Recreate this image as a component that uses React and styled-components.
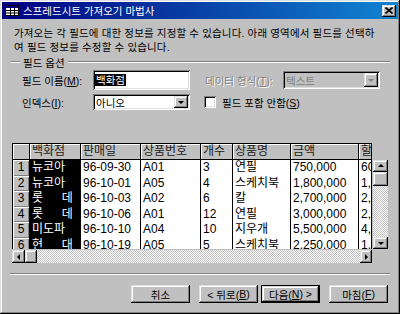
import React from 'react';
import styled, { createGlobalStyle, css } from 'styled-components';

const GlobalStyle = createGlobalStyle`
  html, body { margin: 0; padding: 0; background: #c0c0c0; }
  body { font-family: "Liberation Sans", "Noto Sans CJK KR", sans-serif; }
  * { box-sizing: border-box; }
`;

const raised = css`
  box-shadow: inset -1px -1px #000, inset 1px 1px #dfdfdf, inset -2px -2px #808080, inset 2px 2px #fff;
`;

const sunken = css`
  box-shadow: inset 1px 1px #808080, inset -1px -1px #fff, inset 2px 2px #000, inset -2px -2px #dfdfdf;
`;

const checker = css`
  background: repeating-conic-gradient(#c0c0c0 0 25%, #fff 0 50%) 0 0 / 2px 2px;
`;

const columns = [
  { title: '백화점', width: 51, selected: true },
  { title: '판매일', width: 60 },
  { title: '상품번호', width: 60 },
  { title: '개수', width: 32 },
  { title: '상품명', width: 58 },
  { title: '금액', width: 68 },
  { title: '할', width: 12, last: true },
];

const rows = [
  ['뉴코아', '96-09-30', 'A01', '3', '연필', '750,000', '60'],
  ['뉴코아', '96-10-01', 'A05', '4', '스케치북', '1,800,000', '1,'],
  ['롯\u3000  데', '96-10-03', 'A02', '6', '칼', '2,700,000', '2,'],
  ['롯\u3000  데', '96-10-06', 'A01', '12', '연필', '3,000,000', '2,'],
  ['미도파', '96-10-10', 'A04', '10', '지우개', '5,500,000', '4,'],
  ['현\u3000  대', '96-10-19', 'A05', '5', '스케치북', '2,250,000', '1,'],
];

export default function App() {
  return (
    <>
      <GlobalStyle />
      <Window>
        <TitleBar>
          <svg width="14" height="11" viewBox="0 0 14 11">
            <rect x="0.5" y="0.5" width="13" height="10" fill="#fff" stroke="#000" />
            <rect x="1" y="1" width="12" height="2" fill="#000080" />
            <path d="M1 5.5H13M1 8H13M5.5 3V10M9.5 3V10" stroke="#000" strokeWidth="1" />
          </svg>
          <TitleText>스프레드시트 가져오기 마법사</TitleText>
          <CloseButton>
            <svg width="8" height="7" viewBox="0 0 8 7">
              <path d="M0.5 0.5L7.5 6.5M7.5 0.5L0.5 6.5" stroke="#000" strokeWidth="1.6" />
            </svg>
          </CloseButton>
        </TitleBar>

        <Content>
          <Intro>
            가져오는 각 필드에 대한 정보를 지정할 수 있습니다. 아래 영역에서 필드를 선택하
            <br />
            여 필드 정보를 수정할 수 있습니다.
          </Intro>

          <GroupHeader>
            <EtchedLine $width={9} />
            <span>필드 옵션</span>
            <EtchedLine />
          </GroupHeader>

          <FormGrid>
            <Label>
              필드 이름(<u>M</u>):
            </Label>
            <TextBox>
              <Selection>백화점</Selection>
            </TextBox>
            <span />
            <Label $disabled $indent>
              데이터 형식(<u>T</u>):
            </Label>
            <Combo $disabled $height={18}>
              <ComboText>텍스트</ComboText>
              <DropButton>
                <Arrow $dir="down" $disabled />
              </DropButton>
            </Combo>

            <Label>
              인덱스(<u>I</u>):
            </Label>
            <Combo $height={16}>
              <ComboText>아니오</ComboText>
              <DropButton>
                <Arrow $dir="down" />
              </DropButton>
            </Combo>
            <span />
            <CheckRow>
              <CheckBox />
              <span>
                필드 포함 안함(<u>S</u>)
              </span>
            </CheckRow>
          </FormGrid>

          <GridArea>
            <Table>
              <HeaderCell $corner />
              {columns.map((c) => (
                <HeaderCell key={c.title} $last={c.last}>
                  {c.title}
                </HeaderCell>
              ))}
              {rows.map((r, i) => (
                <React.Fragment key={i}>
                  <RowSelector>{i + 1}</RowSelector>
                  {r.map((v, j) => (
                    <Cell key={j} $selected={columns[j].selected} $last={columns[j].last}>
                      {v}
                    </Cell>
                  ))}
                </React.Fragment>
              ))}
            </Table>

            <VScroll>
              <ScrollButton $h={12}>
                <Arrow $dir="up" />
              </ScrollButton>
              <Thumb $h={14} />
              <Track />
              <ScrollButton $h={12}>
                <Arrow $dir="down" />
              </ScrollButton>
            </VScroll>

            <HScroll>
              <ScrollButton $w={13}>
                <Arrow $dir="left" />
              </ScrollButton>
              <Thumb $w={12} />
              <Track />
              <ScrollButton $w={12}>
                <Arrow $dir="right" />
              </ScrollButton>
            </HScroll>
          </GridArea>

          <Separator />

          <ButtonRow>
            <Button>취소</Button>
            <Button $gap={9}>
              &lt; 뒤로(<u>B</u>)
            </Button>
            <Button $gap={3} $default>
              다음(<u>N</u>) &gt;
            </Button>
            <Button $gap={9}>
              마침(<u>F</u>)
            </Button>
          </ButtonRow>
        </Content>
      </Window>
    </>
  );
}

const Window = styled.div`
  width: 400px;
  height: 314px;
  padding: 2px;
  background: #c0c0c0;
  box-shadow: inset -1px -1px #000, inset 1px 1px #dfdfdf, inset -2px -2px #808080, inset 2px 2px #fff;
  display: flex;
  flex-direction: column;
  font-size: 10.5px;
  color: #000;
  overflow: hidden;
`;

const TitleBar = styled.div`
  height: 17px;
  display: flex;
  align-items: center;
  gap: 4px;
  padding: 0 2px 0 3px;
  background: linear-gradient(90deg, #000080, #1084d0);
`;

const TitleText = styled.span`
  flex: 1;
  color: #fff;
  font-size: 10.5px;
  white-space: nowrap;
`;

const CloseButton = styled.div`
  width: 14px;
  height: 12px;
  background: #c0c0c0;
  ${raised};
  display: flex;
  align-items: center;
  justify-content: center;
`;

const Content = styled.div`
  display: flex;
  flex-direction: column;
  padding: 0 8px 0 8px;
`;

const Intro = styled.p`
  margin: 7px 0 0 4px;
  line-height: 14px;
  white-space: nowrap;
  letter-spacing: 0.15px;
`;

const GroupHeader = styled.div`
  margin: 2px 0 0 1px;
  height: 12px;
  display: flex;
  align-items: center;
  gap: 3px;
`;

const EtchedLine = styled.div`
  height: 2px;
  border-top: 1px solid #808080;
  border-bottom: 1px solid #fff;
  ${(p) => (p.$width ? `width: ${p.$width}px;` : 'flex: 1;')}
`;

const FormGrid = styled.div`
  margin: 2px 0 0 12px;
  display: grid;
  grid-template-columns: 71px 97px 13px 80px 97px;
  grid-template-rows: 20px 16px;
  row-gap: 4px;
  align-items: center;
`;

const Label = styled.span`
  white-space: nowrap;
  padding-left: ${(p) => (p.$indent ? 2 : 0)}px;
  ${(p) =>
    p.$disabled &&
    css`
      color: #808080;
      text-shadow: 1px 1px #fff;
    `}
`;

const TextBox = styled.div`
  height: 20px;
  background: #fff;
  ${sunken};
  display: flex;
  align-items: center;
  padding: 0 2px;
`;

const Selection = styled.span`
  background: #000;
  color: #fff;
  line-height: 12px;
  padding: 0 1px;
`;

const Combo = styled.div`
  height: ${(p) => p.$height}px;
  background: ${(p) => (p.$disabled ? '#c0c0c0' : '#fff')};
  color: ${(p) => (p.$disabled ? '#808080' : '#000')};
  ${sunken};
  display: flex;
  align-items: stretch;
  padding: 2px;
`;

const ComboText = styled.span`
  flex: 1;
  display: flex;
  align-items: center;
  padding-left: 1px;
`;

const DropButton = styled.div`
  width: 14px;
  background: #c0c0c0;
  ${raised};
  display: flex;
  align-items: center;
  justify-content: center;
`;

const Arrow = styled.span`
  width: 0;
  height: 0;
  border: 3px solid transparent;
  ${(p) => {
    const c = p.$disabled ? '#808080' : '#000';
    switch (p.$dir) {
      case 'up':
        return `border-bottom: 3px solid ${c}; border-top-width: 0; margin-top: -1px;`;
      case 'left':
        return `border-right: 3px solid ${c}; border-left-width: 0;`;
      case 'right':
        return `border-left: 3px solid ${c}; border-right-width: 0;`;
      default:
        return `border-top: 3px solid ${c}; border-bottom-width: 0;`;
    }
  }}
`;

const CheckRow = styled.div`
  grid-column: 4 / 6;
  display: flex;
  align-items: center;
  gap: 6px;
  padding-left: 1px;
  white-space: nowrap;
`;

const CheckBox = styled.span`
  width: 12px;
  height: 12px;
  background: #fff;
  ${sunken};
`;

const GridArea = styled.div`
  margin: 33px 0 0 2px;
  display: grid;
  grid-template-columns: 360px 15px;
  grid-template-rows: 106px 13px;
  column-gap: 1px;
  row-gap: 1px;
`;

const Table = styled.div`
  border: 1px solid #000;
  border-bottom: none;
  overflow: hidden;
  display: grid;
  grid-template-columns: 17px ${columns.map((c) => `${c.width}px`).join(' ')};
  grid-template-rows: 16px repeat(6, 15.6px);
  font-size: 12px;
`;

const HeaderCell = styled.div`
  background: #c0c0c0;
  border-bottom: 1px solid #000;
  border-right: ${(p) => (p.$last ? 'none' : '1px solid #000')};
  box-shadow: inset 1px 1px #fff;
  padding-left: 2px;
  line-height: 15px;
  white-space: nowrap;
  overflow: hidden;
  color: #202020;
`;

const RowSelector = styled.div`
  background: #c0c0c0;
  border-right: 1px solid #000;
  box-shadow: inset 1px 1px #fff, inset -1px -1px #808080;
  text-align: center;
  line-height: 15px;
`;

const Cell = styled.div`
  background: ${(p) => (p.$selected ? '#000' : '#fff')};
  color: ${(p) => (p.$selected ? '#fff' : '#000')};
  border-right: ${(p) => (p.$last ? 'none' : '1px solid #000')};
  padding-left: 2px;
  line-height: 15px;
  white-space: pre;
  overflow: hidden;
`;

const VScroll = styled.div`
  margin-top: 17px;
  display: flex;
  flex-direction: column;
`;

const HScroll = styled.div`
  display: flex;
`;

const ScrollButton = styled.div`
  ${(p) => (p.$h ? `height: ${p.$h}px;` : '')}
  ${(p) => (p.$w ? `width: ${p.$w}px;` : '')}
  flex-shrink: 0;
  background: #c0c0c0;
  ${raised};
  display: flex;
  align-items: center;
  justify-content: center;
`;

const Thumb = styled.div`
  ${(p) => (p.$h ? `height: ${p.$h}px;` : '')}
  ${(p) => (p.$w ? `width: ${p.$w}px;` : '')}
  flex-shrink: 0;
  background: #c0c0c0;
  ${raised};
`;

const Track = styled.div`
  flex: 1;
  ${checker};
`;

const Separator = styled.div`
  margin-top: 10px;
  height: 2px;
  border-top: 1px solid #808080;
  border-bottom: 1px solid #fff;
`;

const ButtonRow = styled.div`
  margin-top: 10px;
  display: flex;
  justify-content: flex-end;
  padding-right: 2px;
`;

const Button = styled.div`
  width: 59px;
  height: 18px;
  margin-left: ${(p) => p.$gap || 0}px;
  background: #c0c0c0;
  ${raised};
  ${(p) =>
    p.$default &&
    css`
      border: 1px solid #000;
    `}
  display: flex;
  align-items: center;
  justify-content: center;
  white-space: nowrap;
`;
